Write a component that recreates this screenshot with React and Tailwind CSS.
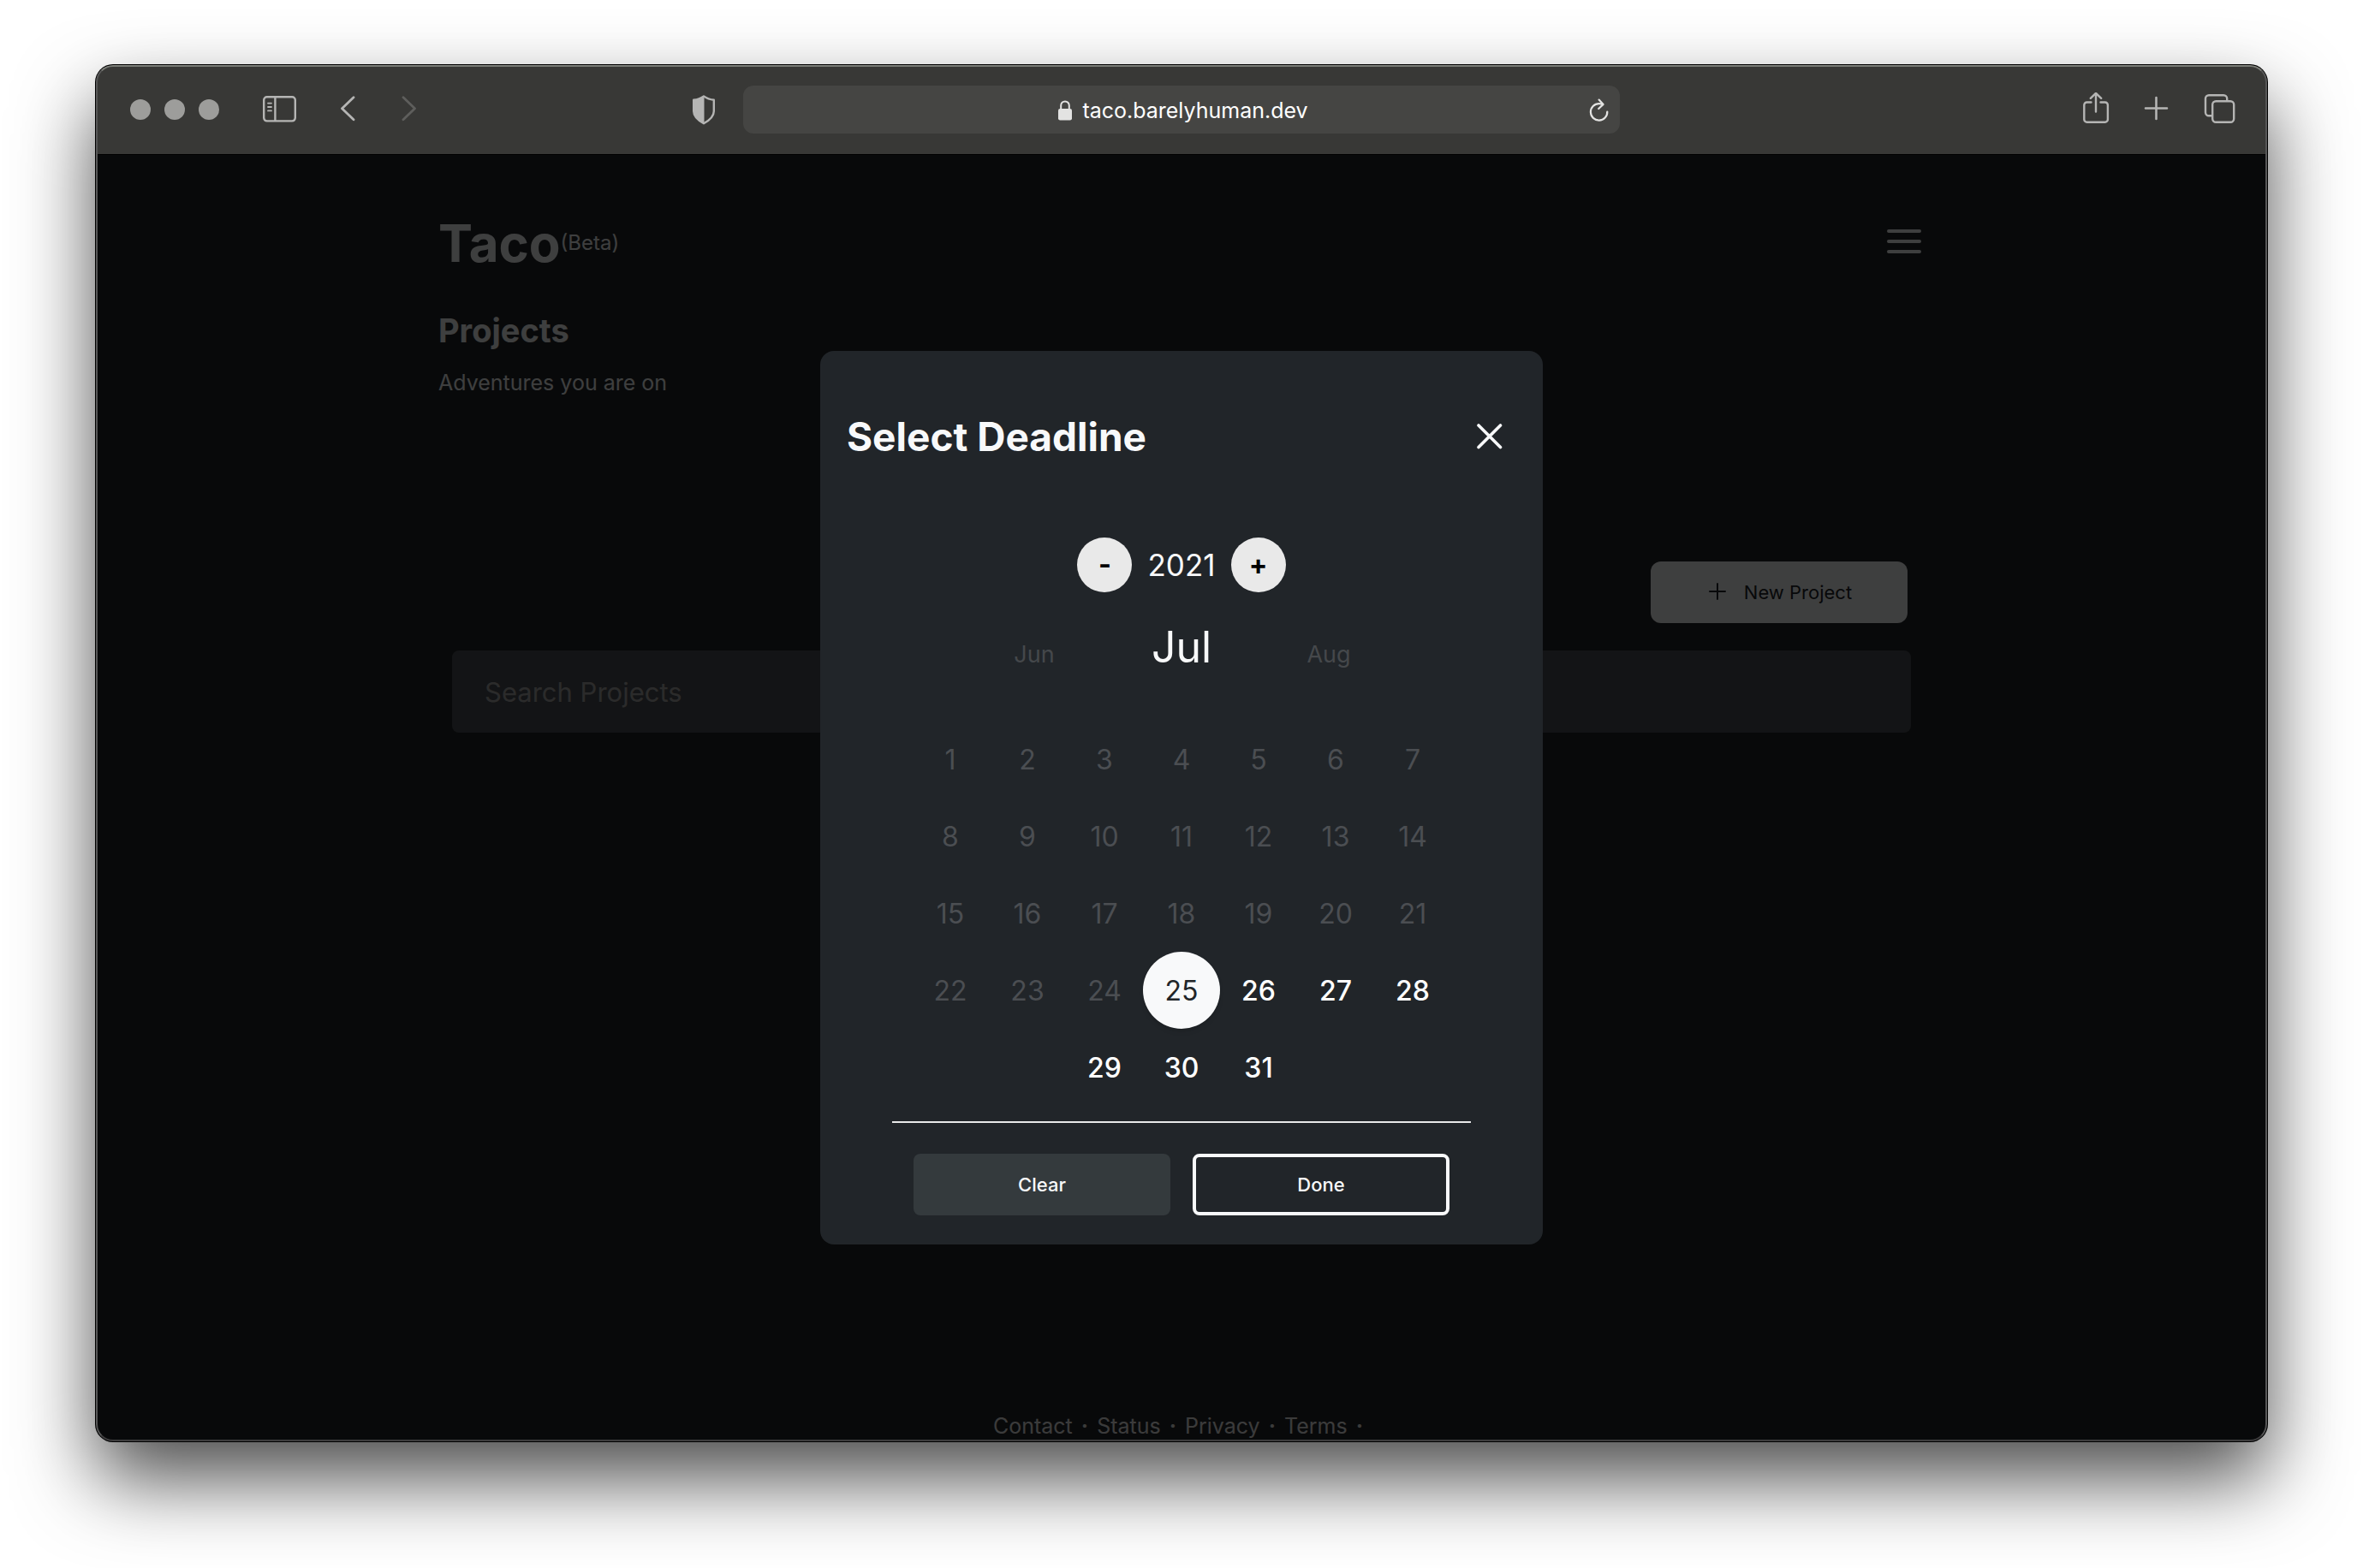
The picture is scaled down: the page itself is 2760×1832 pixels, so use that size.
import React, { useState } from 'react';

const years = { min: 2000, start: 2021 };
const months = ['Jan', 'Feb', 'Mar', 'Apr', 'May', 'Jun', 'Jul', 'Aug', 'Sep', 'Oct', 'Nov', 'Dec'];
const footerLinks = ['Contact', 'Status', 'Privacy', 'Terms'];
const firstOpenDay = 25;

const SidebarIcon = () => (
  <svg className="w-10 h-8" viewBox="0 0 40 32" fill="none" stroke="currentColor" strokeWidth="2.4">
    <rect x="2.2" y="1.2" width="36.6" height="28.2" rx="3.6" />
    <path d="M15.4 1.5v28" />
    <path d="M7 8.600h4M7 13h4M7 17.400h4" strokeWidth="1.8" strokeLinecap="round" />
  </svg>
);

const ChevronIcon = ({ flip }) => (
  <svg className="size-8" viewBox="0 0 32 32" fill="none" stroke="currentColor" strokeWidth="2.8" strokeLinecap="round" strokeLinejoin="round">
    {flip ? <path d="M9 1.800L22.500 14.800L9 27.800" /> : <path d="M23 1.800L9.500 14.800L23 27.800" />}
  </svg>
);

const ShieldIcon = () => (
  <svg className="w-7 h-9" viewBox="0 0 28 36" fill="none">
    <path d="M14 2.4C17.5 5 21.5 6.4 25.8 6.8V20c0 6.500-5 10.500-11.800 14.200C7.200 30.500 2.200 26.500 2.200 20V6.800C6.500 6.400 10.500 5 14 2.400Z" stroke="currentColor" strokeWidth="2.4" strokeLinejoin="round" />
    <path d="M14.500 2.400C10.500 5 6.500 6.400 2.200 6.800V20c0 6.500 5 10.500 12.300 14.200Z" fill="currentColor" />
  </svg>
);

const LockIcon = () => (
  <svg className="w-4 h-6" viewBox="0 0 16 24" fill="none">
    <rect x="0" y="10" width="16" height="13.500" rx="2.200" fill="currentColor" />
    <path d="M3.200 11V6.200a4.800 4.800 0 0 1 9.600 0V11" stroke="currentColor" strokeWidth="2" />
  </svg>
);

const ReloadIcon = () => (
  <svg className="w-6 h-7" viewBox="0 0 24 28" fill="none" stroke="currentColor" strokeWidth="2.200" strokeLinecap="round" strokeLinejoin="round">
    <path d="M21.300 16.500A9.700 9.700 0 1 1 11.600 7.200C13 7.200 14.600 7.400 16 7.900" />
    <path d="M11.600 2.600L16.600 7.900L11.200 13" />
  </svg>
);

const ShareIcon = () => (
  <svg className="size-10" viewBox="0 0 40 40" fill="none" stroke="currentColor" strokeWidth="2.400" strokeLinecap="round" strokeLinejoin="round">
    <path d="M14.500 11.500H9.500a3.200 3.200 0 0 0-3.200 3.200V31.500a3.200 3.200 0 0 0 3.200 3.200h21.200a3.200 3.200 0 0 0 3.200-3.200V14.700a3.200 3.200 0 0 0-3.200-3.200H25.500" />
    <path d="M20 22.500V1.500M13.800 6.800L20 0.800L26.200 6.800" />
  </svg>
);

const PlusIcon = () => (
  <svg className="w-9 h-10" viewBox="0 0 36 40" fill="none" stroke="currentColor" strokeWidth="2.600" strokeLinecap="round">
    <path d="M18.500 6v25M6 18.500h25" />
  </svg>
);

const TabsIcon = () => (
  <svg className="size-10 overflow-visible" viewBox="0 0 40 40" fill="none" stroke="currentColor" strokeWidth="2.400" strokeLinejoin="round">
    <rect x="16.200" y="10.200" width="25" height="24.600" rx="4" />
    <path d="M15.500 27.300H12a4 4 0 0 1-4-4V7.200a4 4 0 0 1 4-4h17.200a4 4 0 0 1 4 4V10" />
  </svg>
);

const Toolbar = () => (
  <header className="flex items-center h-26 shrink-0 px-10 bg-[#383836] text-[#b5b5b4]">
    <div className="flex flex-1 items-center">
      <div className="flex gap-4">
        <span className="size-6 rounded-full bg-[#9d9d9b]" />
        <span className="size-6 rounded-full bg-[#9d9d9b]" />
        <span className="size-6 rounded-full bg-[#9d9d9b]" />
      </div>
      <button aria-label="Show sidebar" className="ml-[50px]"><SidebarIcon /></button>
      <button aria-label="Back" className="ml-11"><ChevronIcon /></button>
      <button aria-label="Forward" className="ml-10 text-[#5e5e5c]"><ChevronIcon flip /></button>
      <button aria-label="Privacy report" className="ml-auto mr-8"><ShieldIcon /></button>
    </div>

    <div className="flex items-center w-full max-w-[1024px] h-14 rounded-xl bg-[#454543] px-3 text-[#e3e3e2]">
      <div className="flex flex-1 items-center justify-center gap-3 pt-0.5 pl-7">
        <LockIcon />
        <input
          aria-label="Address"
          defaultValue="taco.barelyhuman.dev"
          className="field-sizing-content bg-transparent text-[25px] leading-8 text-white outline-none"
        />
      </div>
      <button aria-label="Reload"><ReloadIcon /></button>
    </div>

    <div className="flex flex-1 items-center justify-end gap-8">
      <button aria-label="Share"><ShareIcon /></button>
      <button aria-label="New tab"><PlusIcon /></button>
      <button aria-label="Show tabs"><TabsIcon /></button>
    </div>
  </header>
);

const DeadlineDialog = () => {
  const [year, setYear] = useState(years.start);
  const [month, setMonth] = useState(6);
  const [day, setDay] = useState(25);

  const getDayStyle = (d) => {
    if (d === day) return 'bg-[#f8f9fa] text-[#212529] shadow-md';
    if (d < firstOpenDay) return 'text-[#4b4e52]';
    return 'text-white font-medium';
  };

  return (
    <div role="dialog" aria-labelledby="deadline-title" className="w-full max-w-[844px] rounded-2xl bg-[#212529] pt-18 pb-[34px] text-[#f8f9fa]">
      <div className="flex items-center justify-between pl-[31px] pr-10">
        <h2 id="deadline-title" className="text-[46px] leading-14 font-bold">Select Deadline</h2>
        <button aria-label="Close">
          <svg className="size-11" viewBox="0 0 44 44" fill="none" stroke="currentColor" strokeWidth="3.6" strokeLinecap="round">
            <path d="M9 9l25.500 25.500M34.500 9L9 34.500" />
          </svg>
        </button>
      </div>

      <div className="flex items-center justify-center gap-[18px] mt-[90px]">
        <button aria-label="Previous year" onClick={() => setYear(Math.max(years.min, year - 1))} className="size-16 rounded-full bg-[#e9e9e9] text-[32px] leading-8 font-bold text-black">-</button>
        <span className="text-[35px] leading-12">{year}</span>
        <button aria-label="Next year" onClick={() => setYear(year + 1)} className="size-16 rounded-full bg-[#e9e9e9] text-[32px] leading-8 font-bold text-black">+</button>
      </div>

      <div className="grid grid-cols-3 items-baseline w-[516px] mx-auto mt-8 text-center">
        <button onClick={() => setMonth((month + 11) % 12)} className="text-[27px] leading-10 text-[#45484b]">{months[(month + 11) % 12]}</button>
        <span className="text-[50px] leading-16">{months[month]}</span>
        <button onClick={() => setMonth((month + 1) % 12)} className="text-[27px] leading-10 text-[#45484b]">{months[(month + 1) % 12]}</button>
      </div>

      <div className="flex flex-wrap justify-center w-[630px] mx-auto mt-[54px]">
        {Array.from({ length: 31 }, (_, i) => i + 1).map((d) => (
          <button
            key={d}
            disabled={d < firstOpenDay}
            onClick={() => setDay(d)}
            className={`size-[90px] rounded-full pt-0.5 text-[32px] leading-10 ${getDayStyle(d)}`}
          >
            {d}
          </button>
        ))}
      </div>

      <hr className="w-[676px] mx-auto mt-[18px] border-t-2 border-[#e9e9e9]" />

      <div className="flex justify-center gap-[26px] mt-9 text-[22px] leading-8 font-medium">
        <button className="w-[300px] h-18 rounded-lg bg-[#343a3d]">Clear</button>
        <button className="w-[300px] h-18 rounded-lg border-4 border-[#f8f9fa]">Done</button>
      </div>
    </div>
  );
};

export default function App() {
  return (
    <div className="flex min-h-screen bg-white px-28 pt-19 pb-37 font-['Inter',sans-serif]">
      <div className="relative flex flex-1 flex-col rounded-[20px] overflow-hidden bg-[#08090a] shadow-[0_0_0_1px_#000,0_44px_92px_rgba(0,0,0,0.7)]">
        <Toolbar />

        <div className="relative flex flex-1 flex-col bg-[#212529] text-[#f8f9fa]">
          <main className="w-full max-w-[1736px] mx-auto pt-[68px]">
            <div className="flex items-center justify-between">
              <div className="flex items-center">
                <h1 className="text-[60px] leading-18 font-bold">Taco</h1>
                <span className="text-[24px] leading-8">(Beta)</span>
              </div>
              <button aria-label="Menu">
                <svg className="size-12" viewBox="0 0 48 48" fill="none" stroke="currentColor" strokeWidth="4" strokeLinecap="round">
                  <path d="M6 10h36M6 22h36M6 34h36" />
                </svg>
              </button>
            </div>

            <h2 className="mt-[42px] text-[38px] leading-12 font-bold">Projects</h2>
            <p className="mt-[17px] text-[25px] leading-10">Adventures you are on</p>

            {/* Project actions */}
            <div className="flex justify-end mt-[189px] pr-5">
              <button className="flex items-center justify-center gap-4 w-[300px] h-18 rounded-xl bg-[#f8f9fa] text-[22px] leading-8 text-[#212529]">
                <svg className="size-7" viewBox="0 0 28 28" fill="none" stroke="currentColor" strokeWidth="2" strokeLinecap="round">
                  <path d="M13 4v18M4 13h18" />
                </svg>
                New Project
              </button>
            </div>
            <div className="flex mt-8 px-4">
              <input
                type="text"
                aria-label="Search projects"
                placeholder="Search Projects"
                className="w-full h-24 rounded-lg bg-[#4e5257] px-[38px] text-[31px] leading-10 placeholder:text-[#acacac] outline-none"
              />
            </div>
          </main>

          <footer className="flex justify-center gap-[10px] mt-auto pr-2 text-[25px] leading-9 text-[#e9e9e9]">
            {footerLinks.map((link) => (
              <React.Fragment key={link}>
                <a href="#">{link}</a>
                <span className="font-bold">·</span>
              </React.Fragment>
            ))}
          </footer>

          <div className="absolute inset-0 flex items-center justify-center bg-black/75 shadow-[inset_0_1px_0_#000]">
            <DeadlineDialog />
          </div>
        </div>

        {/* Window edge highlight */}
        <div className="absolute inset-0 rounded-[20px] border-2 border-t-[#7b7d77] border-x-[#575757] border-b-[#3d3c3d] pointer-events-none" />
      </div>
    </div>
  );
}
